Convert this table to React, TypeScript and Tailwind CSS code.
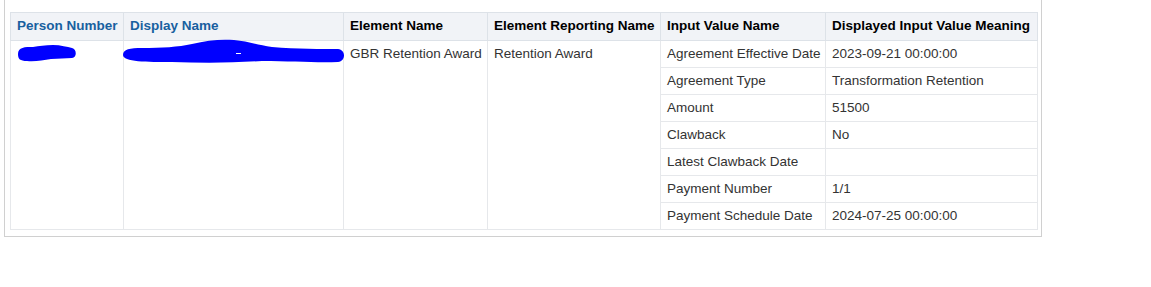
import React from "react";

type Pair = { name: string; value: string };

const inputs: Pair[] = [
  { name: "Agreement Effective Date", value: "2023-09-21 00:00:00" },
  { name: "Agreement Type", value: "Transformation Retention" },
  { name: "Amount", value: "51500" },
  { name: "Clawback", value: "No" },
  { name: "Latest Clawback Date", value: "" },
  { name: "Payment Number", value: "1/1" },
  { name: "Payment Schedule Date", value: "2024-07-25 00:00:00" },
];

// redaction scribbles over the person number / name links
const ScribbleShort = () => (
  <svg width="60" height="17" viewBox="0 0 60 17" className="block">
    <path
      d="M1 9 C1 2 8 2 16 2 C22 1 28 0 36 0 C44 0 50 2 55 3 C60 4 60 13 55 13 C48 13 42 14 34 14 C26 15 18 17 10 16 C3 16 1 14 1 9 Z"
      fill="#0000ff"
    />
  </svg>
);

const ScribbleLong = () => (
  <svg width="224" height="25" viewBox="0 0 224 25" className="block">
    <path
      d="M1 16 C1 10 8 9 20 9 C40 9 56 8 70 5 C85 1 100 0 112 1 C125 2 135 6 150 8 C175 10 200 10 216 10 C224 11 224 22 216 23 C195 24 170 22 140 22 C110 24 80 24 50 23 C25 23 1 23 1 16 Z"
      fill="#0000ff"
    />
    <rect x="114" y="14" width="5" height="1" fill="#ffffff" />
  </svg>
);

export default function App() {
  const th = "border border-[#dde2e8] px-[6px] h-[28px] text-left font-bold whitespace-nowrap";
  const td = "border border-[#e6e8eb] px-[6px] h-[27px] whitespace-nowrap text-[#333333]";

  return (
    <div className="w-[1151px] h-[287px] bg-white font-['Liberation_Sans',Arial,sans-serif] text-[13.5px]">
      <div className="ml-[4px] w-[1038px] border-x border-b border-[#d0d0d0] pt-[12px] pl-[5px] pb-[6px]">
        <table className="table-fixed border-collapse w-[1027px] border border-[#d3dae2]">
          <colgroup>
            <col className="w-[113px]" />
            <col className="w-[220px]" />
            <col className="w-[144px]" />
            <col className="w-[173px]" />
            <col className="w-[165px]" />
            <col className="w-[212px]" />
          </colgroup>
          <thead>
            <tr className="bg-[#f1f3f7]">
              <th className={`${th} text-[#18609f]`}>Person Number</th>
              <th className={`${th} text-[#18609f]`}>Display Name</th>
              <th className={`${th} text-black`}>Element Name</th>
              <th className={`${th} text-black`}>Element Reporting Name</th>
              <th className={`${th} text-black`}>Input Value Name</th>
              <th className={`${th} text-black`}>Displayed Input Value Meaning</th>
            </tr>
          </thead>
          <tbody>
            {inputs.map((row, i) => (
              <tr key={row.name}>
                {i === 0 && (
                  <>
                    <td rowSpan={7} className={`${td} align-top pt-[4px] pl-[6px]`}>
                      <ScribbleShort />
                    </td>
                    <td rowSpan={7} className={`${td} align-top pt-0 pl-0`}>
                      <div className="-mt-[2px] -ml-[2px]">
                        <ScribbleLong />
                      </div>
                    </td>
                    <td rowSpan={7} className={`${td} align-top pt-[3px]`}>
                      GBR Retention Award
                    </td>
                    <td rowSpan={7} className={`${td} align-top pt-[3px]`}>
                      Retention Award
                    </td>
                  </>
                )}
                <td className={td}>{row.name}</td>
                <td className={td}>{row.value}</td>
              </tr>
            ))}
          </tbody>
        </table>
      </div>
    </div>
  );
}
